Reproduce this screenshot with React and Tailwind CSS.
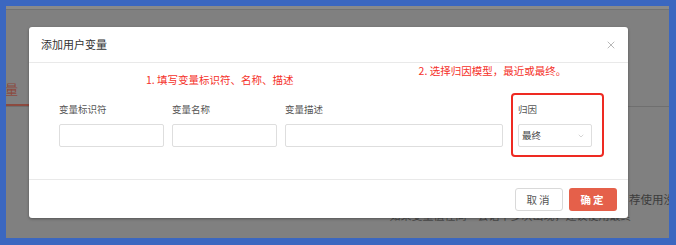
import { X, ChevronDown } from "lucide-react";

const font = { fontFamily: '"Noto Sans CJK SC", "Noto Sans", sans-serif' };

function Field({ label, width }) {
  return (
    <div className="flex flex-col pt-[10px] pb-[10px]" style={{ width }}>
      <span className="text-[9.5px] leading-[12px] text-[#555]">{label}</span>
      <div className="mt-[9px] h-[23px] w-full rounded-[2px] border border-[#dedede] bg-white" />
    </div>
  );
}

function Background() {
  return (
    <div className="flex h-full w-full flex-col">
      <div className="h-[4px] border-b border-[#737373] bg-[#8a8a8a]" />
      <div className="mt-[72px] flex items-end border-b border-[#6f6f6f]">
        <div className="-ml-[14px] w-[60px] border-b-2 border-[#8c4a3f] pb-[8px] text-[13px] leading-[14px] text-[#8c4a3f]">
          变量
        </div>
      </div>
      <div className="mt-[85px] whitespace-nowrap pl-[623px] text-[11.5px] leading-[14px] text-[#3c3c3c]">
        荐使用没有
      </div>
      {/* only the lower edge of this line peeks out under the dialog */}
      <div className="mt-[11px] h-[4px] overflow-hidden whitespace-nowrap pl-[370px]">
        <div className="-mt-[9px] text-[11px] leading-[14px] text-[#4a4a4a]">
          • 如果变量值在同一会话中多次出现，建议使用最终
        </div>
      </div>
    </div>
  );
}

function Modal() {
  return (
    <div className="absolute left-[23px] top-[21px] flex h-[191px] w-[599px] flex-col rounded-[3px] bg-white shadow-[0_1px_3px_rgba(0,0,0,0.35)]">
      <div className="flex h-[36px] items-center justify-between border-b border-[#e9e9e9] pl-[12px] pr-[11px]">
        <span className="text-[11px] text-[#333]">添加用户变量</span>
        <X size={12} strokeWidth={1.4} className="text-[#999]" />
      </div>
      <div className="flex flex-1 flex-col pl-[30px]">
        <div className="flex h-[30px] items-start">
          <span className="ml-[87px] mt-[10px] text-[10.5px] leading-[14px] text-[#f5312a]">
            1. 填写变量标识符、名称、描述
          </span>
          <span className="ml-[125px] mt-[1px] text-[10.5px] leading-[14px] text-[#f5312a]">
            2. 选择归因模型，最近或最终。
          </span>
        </div>
        <div className="flex items-start gap-2">
          <Field label="变量标识符" width={105} />
          <Field label="变量名称" width={105} />
          <Field label="变量描述" width={218} />
          <div className="flex w-[93px] flex-col rounded-[4px] border-2 border-[#ee2a22] pb-[8px] pl-[5px] pr-[10px] pt-[8px]">
            <span className="text-[9.5px] leading-[12px] text-[#555]">归因</span>
            <div className="mt-[9px] flex h-[23px] w-[74px] items-center justify-between rounded-[2px] border border-[#dedede] pl-[3px] pr-[6px]">
              <span className="text-[9.5px] text-[#444]">最终</span>
              <ChevronDown size={8} strokeWidth={1.5} className="text-[#aaa]" />
            </div>
          </div>
        </div>
      </div>
      <div className="flex h-[39px] items-start justify-end gap-[6px] border-t border-[#e9e9e9] pr-[11px] pt-[8px]">
        <button className="h-[23px] w-[48px] rounded-[3px] border border-[#d9d9d9] bg-white text-[10.5px] tracking-[2px] text-[#555]">
          取消
        </button>
        <button className="h-[23px] w-[48px] rounded-[3px] bg-[#e5604a] text-[10.5px] font-bold tracking-[2px] text-white">
          确定
        </button>
      </div>
    </div>
  );
}

export default function App() {
  return (
    <div className="h-[245px] w-[676px] bg-[#3b67c0] pb-[7px] pl-[6px] pr-[7px] pt-[6px]" style={font}>
      <div className="relative h-full w-full overflow-hidden bg-[#808080]">
        <Background />
        <Modal />
      </div>
    </div>
  );
}
